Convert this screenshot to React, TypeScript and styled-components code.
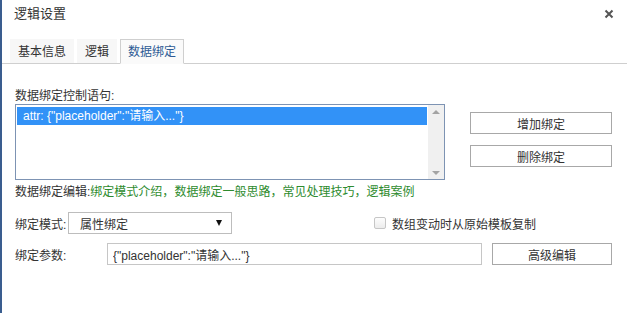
import React, { useState } from 'react';
import styled, { createGlobalStyle } from 'styled-components';

const GlobalStyle = createGlobalStyle`
  html, body {
    margin: 0;
    padding: 0;
    background: #fff;
  }
  body {
    font-family: "Liberation Sans", "Noto Sans CJK SC", sans-serif;
    color: #333;
  }
  * {
    box-sizing: border-box;
  }
`;

const Dialog = styled.div`
  width: 627px;
  height: 313px;
  background: #fff;
  border-left: 2px solid #3a5d8f;
  display: flex;
  flex-direction: column;
  overflow: hidden;
`;

const Header = styled.div`
  height: 39px;
  display: flex;
  align-items: flex-start;
  justify-content: space-between;
  padding: 6px 12px 0 12px;
`;

const Title = styled.h1`
  margin: 0;
  font-size: 13px;
  font-weight: normal;
  line-height: 16px;
  color: #333;
`;

const CloseButton = styled.button`
  border: none;
  background: none;
  padding: 0;
  margin-top: 2px;
  width: 12px;
  height: 12px;
  cursor: pointer;
  display: flex;
  align-items: center;
  justify-content: center;
`;

const TabBar = styled.div`
  display: flex;
  align-items: flex-end;
  gap: 3px;
  padding-left: 8px;
  height: 25px;
  border-bottom: 1px solid #cfcfcf;
`;

const Tab = styled.button<{ $active?: boolean }>`
  height: ${p => (p.$active ? '25px' : '24px')};
  padding: 0 7px;
  margin-bottom: ${p => (p.$active ? '-1px' : '0')};
  border: 1px solid ${p => (p.$active ? '#cfcfcf' : 'transparent')};
  border-bottom: ${p => (p.$active ? '1px solid #fafafa' : 'none')};
  background: ${p => (p.$active ? '#fafafa' : '#f7f7f7')};
  color: ${p => (p.$active ? '#2d5a95' : '#333')};
  font-family: inherit;
  font-size: 12px;
  line-height: 22px;
  cursor: pointer;
`;

const Content = styled.div`
  padding: 24px 15px 0 13px;
  display: flex;
  flex-direction: column;
`;

const Label = styled.div`
  font-size: 12px;
  line-height: 16px;
  color: #333;
`;

const ListRow = styled.div`
  display: flex;
  align-items: flex-start;
`;

const ListBox = styled.div`
  width: 430px;
  height: 76px;
  border: 1px solid #7d93b3;
  display: flex;
  background: #fff;
`;

const ListItems = styled.div`
  flex: 1;
  padding: 2px 1px;
`;

const ListItem = styled.div<{ $selected?: boolean }>`
  height: 18px;
  line-height: 18px;
  padding-left: 6px;
  font-size: 12px;
  background: ${p => (p.$selected ? '#3292f7' : 'transparent')};
  color: ${p => (p.$selected ? '#fff' : '#333')};
  white-space: nowrap;
`;

const ScrollTrack = styled.div`
  width: 16px;
  background: #f0f0f0;
  display: flex;
  flex-direction: column;
  justify-content: space-between;
  align-items: center;
  padding: 5px 0 4px;
`;

const Arrow = styled.span<{ $down?: boolean }>`
  width: 0;
  height: 0;
  border-left: 4px solid transparent;
  border-right: 4px solid transparent;
  ${p =>
    p.$down
      ? 'border-top: 4px solid #a3a3a3;'
      : 'border-bottom: 4px solid #a3a3a3;'}
`;

const ButtonColumn = styled.div`
  display: flex;
  flex-direction: column;
  gap: 11px;
  margin-left: 25px;
  padding-top: 8px;
`;

const PlainButton = styled.button<{ $width?: number }>`
  width: ${p => p.$width ?? 142}px;
  height: 22px;
  border: 1px solid #a8a8a8;
  background: #fff;
  font-family: inherit;
  font-size: 12px;
  color: #333;
  cursor: pointer;
  padding: 0;
`;

const LinkLine = styled.div`
  margin-top: 4px;
  font-size: 12px;
  line-height: 16px;
  color: #333;
`;

const Link = styled.a`
  color: #2e8b2e;
  text-decoration: none;
  cursor: pointer;
`;

const Comma = styled.span`
  color: #2e8b2e;
`;

const FormRow = styled.div<{ $top: number }>`
  display: flex;
  align-items: center;
  margin-top: ${p => p.$top}px;
  height: 22px;
`;

const RowLabel = styled.label<{ $width: number }>`
  width: ${p => p.$width}px;
  font-size: 12px;
  color: #333;
  flex-shrink: 0;
`;

const SelectBox = styled.div`
  width: 164px;
  height: 22px;
  border: 1px solid #bdbdbd;
  display: flex;
  align-items: center;
  justify-content: space-between;
  padding: 0 9px 0 11px;
  font-size: 12px;
  color: #333;
`;

const SelectArrow = styled.span`
  width: 0;
  height: 0;
  border-left: 3.5px solid transparent;
  border-right: 3.5px solid transparent;
  border-top: 6px solid #111;
`;

const CheckLabel = styled.label`
  display: flex;
  align-items: center;
  gap: 6px;
  margin-left: 142px;
  font-size: 12px;
  color: #333;
`;

const CheckBox = styled.span`
  width: 12px;
  height: 12px;
  border: 1px solid #c6c6c6;
  border-radius: 2px;
  background: linear-gradient(#fdfdfd, #ececec);
`;

const TextInput = styled.input`
  width: 381px;
  height: 22px;
  border: 1px solid #c6c6c6;
  padding: 0 5px;
  font-family: inherit;
  font-size: 12px;
  color: #333;
  outline: none;
`;

const App = () => {
  const [tab, setTab] = useState(2);
  const tabs = ['基本信息', '逻辑', '数据绑定'];
  const links = ['绑定模式介绍', '数据绑定一般思路', '常见处理技巧', '逻辑案例'];

  return (
    <>
      <GlobalStyle />
      <Dialog>
        <Header>
          <Title>逻辑设置</Title>
          <CloseButton aria-label="关闭">
            <svg width="10" height="10" viewBox="0 0 10 10">
              <path d="M1.5 1.5L8.5 8.5M8.5 1.5L1.5 8.5" stroke="#555" strokeWidth="2" />
            </svg>
          </CloseButton>
        </Header>

        <TabBar>
          {tabs.map((t, i) => (
            <Tab key={t} $active={tab === i} onClick={() => setTab(i)}>
              {t}
            </Tab>
          ))}
        </TabBar>

        <Content>
          <Label>数据绑定控制语句:</Label>
          <ListRow>
            <ListBox>
              <ListItems>
                <ListItem $selected>attr: {'{"placeholder":"请输入..."}'}</ListItem>
              </ListItems>
              <ScrollTrack>
                <Arrow />
                <Arrow $down />
              </ScrollTrack>
            </ListBox>
            <ButtonColumn>
              <PlainButton>增加绑定</PlainButton>
              <PlainButton>删除绑定</PlainButton>
            </ButtonColumn>
          </ListRow>

          <LinkLine>
            数据绑定编辑:
            {links.map((l, i) => (
              <React.Fragment key={l}>
                <Link>{l}</Link>
                {i < links.length - 1 && <Comma>，</Comma>}
              </React.Fragment>
            ))}
          </LinkLine>

          <FormRow $top={12}>
            <RowLabel $width={53}>绑定模式:</RowLabel>
            <SelectBox>
              <span>属性绑定</span>
              <SelectArrow />
            </SelectBox>
            <CheckLabel>
              <CheckBox />
              数组变动时从原始模板复制
            </CheckLabel>
          </FormRow>

          <FormRow $top={9}>
            <RowLabel $width={92}>绑定参数:</RowLabel>
            <TextInput readOnly value={'{"placeholder":"请输入..."}'} />
            <PlainButton $width={122} style={{ marginLeft: 10 }}>高级编辑</PlainButton>
          </FormRow>
        </Content>
      </Dialog>
    </>
  );
};

export default App;
